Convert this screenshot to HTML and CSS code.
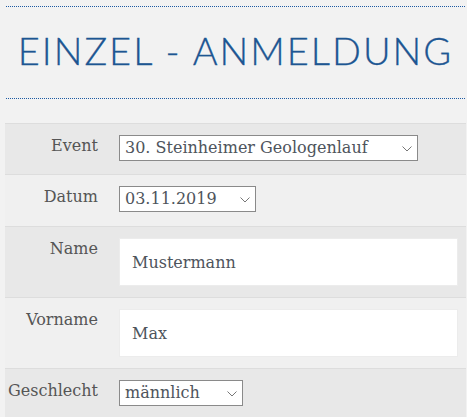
FILE: index.html
```html
<!DOCTYPE html>
<html lang="de">
<head>
<meta charset="utf-8">
<title>Einzel - Anmeldung</title>
<link rel="stylesheet" href="styles.css">
</head>
<body>
<div class="header">
  <h1 class="title">EINZEL - ANMELDUNG</h1>
</div>
<form class="form">
  <div class="row row-dark row-select">
    <label class="label" for="event">Event</label>
    <div class="control">
      <span class="select-wrap">
        <select id="event" class="select select-event">
          <option>30. Steinheimer Geologenlauf</option>
        </select>
        <svg class="chevron" width="10" height="6" viewBox="0 0 10 6" aria-hidden="true"><path d="M0.5 0.5 L5 5 L9.5 0.5" fill="none" stroke="#777" stroke-width="1"/></svg>
      </span>
    </div>
  </div>
  <div class="row row-light row-select row-datum">
    <label class="label" for="datum">Datum</label>
    <div class="control">
      <span class="select-wrap">
        <select id="datum" class="select select-datum">
          <option>03.11.2019</option>
        </select>
        <svg class="chevron" width="10" height="6" viewBox="0 0 10 6" aria-hidden="true"><path d="M0.5 0.5 L5 5 L9.5 0.5" fill="none" stroke="#777" stroke-width="1"/></svg>
      </span>
    </div>
  </div>
  <div class="row row-dark row-input">
    <label class="label" for="name">Name</label>
    <div class="control">
      <input id="name" class="text" type="text" value="Mustermann">
    </div>
  </div>
  <div class="row row-light row-input">
    <label class="label" for="vorname">Vorname</label>
    <div class="control">
      <input id="vorname" class="text" type="text" value="Max">
    </div>
  </div>
  <div class="row row-dark row-select">
    <label class="label" for="geschlecht">Geschlecht</label>
    <div class="control">
      <span class="select-wrap">
        <select id="geschlecht" class="select select-sex">
          <option>männlich</option>
          <option>weiblich</option>
        </select>
        <svg class="chevron" width="10" height="6" viewBox="0 0 10 6" aria-hidden="true"><path d="M0.5 0.5 L5 5 L9.5 0.5" fill="none" stroke="#777" stroke-width="1"/></svg>
      </span>
    </div>
  </div>
</form>
</body>
</html>
```
FILE: styles.css
```css
html, body {
  margin: 0;
  padding: 0;
  background: #f2f2f2;
}

body {
  font-family: "DejaVu Serif", "Liberation Serif", serif;
  font-size: 16px;
  color: #555;
  overflow: hidden;
}

.header {
  margin: 6px 2px 0 6px;
  border-top: 1px dotted #1d5aa3;
  border-bottom: 1px dotted #1d5aa3;
}

.title {
  margin: 0;
  padding: 0 0 4px 0;
  font-family: "Lato", "DejaVu Sans", sans-serif;
  font-weight: 300;
  font-size: 38px;
  line-height: 87px;
  letter-spacing: 2px;
  text-align: center;
  color: #1d5692;
  -webkit-text-stroke: 0.3px #1d5692;
}

.form {
  margin: 24px 1px 0 5px;
}

.row {
  display: grid;
  grid-template-columns: 93px 1fr;
  column-gap: 21px;
  padding: 11px 8px 13px 0;
  border-top: 1px solid #dddddd;
}

.row-datum {
  padding-bottom: 14px;
}

.row-input {
  padding-bottom: 11px;
}

.row-dark {
  background: #e8e8e8;
}

.row-light {
  background: #f0f0f0;
}

.label {
  text-align: right;
  line-height: 22px;
  color: #555;
}

.control {
  display: flex;
  align-items: flex-start;
}

.select-wrap {
  position: relative;
  display: inline-block;
  line-height: 0;
}

.select {
  -webkit-appearance: none;
  appearance: none;
  box-sizing: border-box;
  height: 26px;
  margin: 0;
  padding: 0 20px 0 5px;
  border: 1px solid #8a8a8a;
  border-radius: 0;
  background: #fff;
  font-family: "DejaVu Serif", "Liberation Serif", serif;
  font-size: 16px;
  line-height: 24px;
  color: #4e545c;
}

.chevron {
  position: absolute;
  right: 6px;
  top: 11px;
  pointer-events: none;
}

.select-event {
  width: 299px;
}

.select-datum {
  width: 137px;
}

.select-sex {
  width: 124px;
}

.text {
  box-sizing: border-box;
  width: 100%;
  height: 48px;
  margin: 0;
  padding: 0 12px;
  border: 1px solid #ececec;
  background: #fff;
  font-family: "DejaVu Serif", "Liberation Serif", serif;
  font-size: 16px;
  color: #4e545c;
  outline: none;
}
```
